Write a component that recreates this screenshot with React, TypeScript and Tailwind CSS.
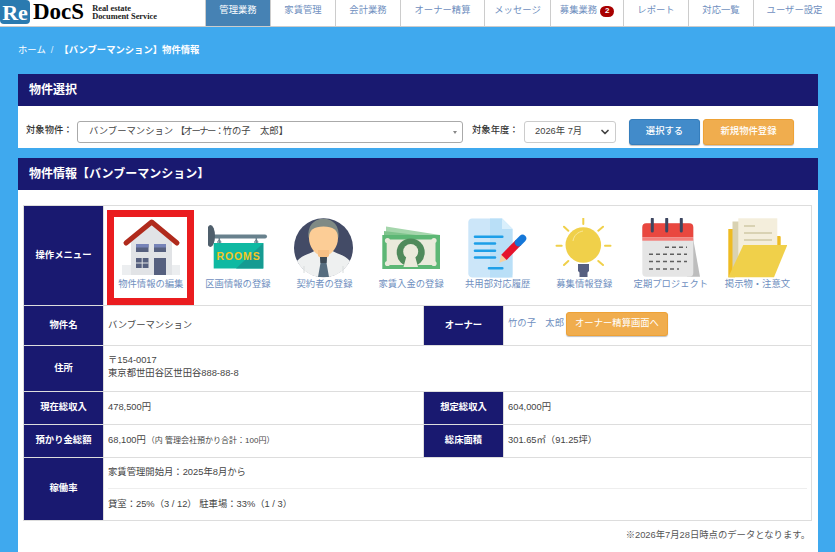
import { ChevronDown } from "lucide-react";

const jp = "font-['Liberation_Sans','Noto_Sans_CJK_JP',sans-serif]";

const navItems = [
  { label: "管理業務", w: "w-[65px]", active: true },
  { label: "家賃管理", w: "w-[65px]" },
  { label: "会計業務", w: "w-[65px]" },
  { label: "オーナー精算", w: "w-[84px]" },
  { label: "メッセージ", w: "w-[66px]" },
  { label: "募集業務", w: "w-[73px]", badge: 2 },
  { label: "レポート", w: "w-[65px]" },
  { label: "対応一覧", w: "w-[65px]" },
  { label: "ユーザー設定", w: "w-[82px]" },
];

function HouseIcon() {
  return (
    <svg width="60" height="60" viewBox="0 0 60 60">
      <g fill="#eceef0">
        <rect x="1" y="47" width="9" height="10" />
        <rect x="50" y="47" width="9" height="10" />
      </g>
      <path d="M10 24 30.5 7 51 24V57H10Z" fill="#e1e3e6" />
      <path d="M5 25 30.7 4 56 25" fill="none" stroke="#b02a1c" strokeWidth="5" strokeLinecap="round" strokeLinejoin="round" />
      <rect x="15" y="26" width="12.5" height="8" fill="#56607f" />
      <rect x="15" y="26" width="12.5" height="3.5" fill="#7683b8" />
      <rect x="33" y="26" width="12" height="8" fill="#56607f" />
      <rect x="33" y="26" width="12" height="3.5" fill="#7683b8" />
      <rect x="15" y="40" width="12.5" height="10" fill="#56607f" />
      <path d="M21.2 40V50M15 45H27.5" stroke="#e1e3e6" strokeWidth="1" />
      <rect x="33" y="40" width="12" height="17" fill="#56607f" />
    </svg>
  );
}

function RoomsIcon() {
  return (
    <svg width="60" height="60" viewBox="0 0 60 60">
      <rect x="2" y="16.5" width="57" height="4" rx="2" fill="#68818d" />
      <ellipse cx="2.5" cy="18" rx="4.5" ry="11" fill="#4f5f6c" />
      <path d="M11.3 20V25M48.3 20V25" stroke="#68818d" strokeWidth="1.5" />
      <circle cx="11.3" cy="24" r="1.6" fill="none" stroke="#68818d" />
      <circle cx="48.3" cy="24" r="1.6" fill="none" stroke="#68818d" />
      <rect x="5.7" y="25" width="49.6" height="25.5" fill="#0fb9a2" />
      <path d="M55.3 25V50.5H28Z" fill="#169b92" />
      <text x="30.5" y="42" textAnchor="middle" fontSize="10.5" fontWeight="700" letterSpacing="0.9" fill="#f3c623" fontFamily="Liberation Sans, sans-serif">ROOMS</text>
    </svg>
  );
}

function PersonIcon() {
  return (
    <svg width="60" height="60" viewBox="0 0 60 60">
      <circle cx="29.5" cy="29.7" r="29.5" fill="#434b66" />
      <path d="M3 43C8 37 16 36 22 32H37C43 36 51 37 56 43 51 53 41 59.5 29.5 59.5 18 59.5 8 53 3 43Z" fill="#eef0f0" />
      <path d="M14.5 20C13 8 20 .8 29.5 .8S46 8 44.5 20L40 12H19Z" fill="#7f8a85" />
      <path d="M15 20C15 12 20 8.5 29.5 8.5S44 12 44 20C44 30 36 38.5 29.5 38.5S15 30 15 20Z" fill="#fccd96" />
      <path d="M24 32H35V38L29.5 42 24 38Z" fill="#f7c085" />
      <path d="M26 39H33L32.5 45 35 59H24L26.5 45Z" fill="#566d7f" />
      <path d="M26 39H33L32.5 45H26.5Z" fill="#3d4a55" />
      <path d="M10 48V55M49 48V55" stroke="#d8dcdc" strokeWidth="1" />
    </svg>
  );
}

function MoneyIcon() {
  return (
    <svg width="60" height="60" viewBox="0 0 60 60">
      <path d="M5 8.5 59 17V24H5Z" fill="#a5d6ac" />
      <path d="M3 13 59 20V26H3Z" fill="#7fc48c" />
      <rect x="1.3" y="17" width="57.7" height="34" fill="#5db775" />
      <path d="M9 21.5H51L54.5 25V43.5L51 47H9L5.7 43.5V25Z" fill="#eaeadb" />
      <circle cx="29.7" cy="34.5" r="14" fill="#4f8a5b" />
      <circle cx="29.7" cy="33.5" r="7.5" fill="#eaeadb" />
      <path d="M25.5 38H34L37 49H22.5Z" fill="#eaeadb" />
      <g fill="#eaeadb">
        <circle cx="6.5" cy="22.5" r="2.6" />
        <circle cx="53" cy="22.5" r="2.6" />
        <circle cx="6.5" cy="45.5" r="2.6" />
        <circle cx="53" cy="45.5" r="2.6" />
      </g>
    </svg>
  );
}

function DocIcon() {
  return (
    <svg width="60" height="60" viewBox="0 0 60 60">
      <path d="M4 .5H34L44.5 11V55A4 4 0 0 1 40.5 59.5H4A4 4 0 0 1 .3 55V4A4 4 0 0 1 4 .5Z" fill="#cce6f9" />
      <path d="M22 .5H34L44.5 11V59.5H22Z" fill="#b9dff7" />
      <path d="M34 .5 44.5 11H34Z" fill="#d9effc" />
      <path d="M7 18.7H34.3M7 25.5H27M7 32.7H27M7 39.5H27M21 50.3H34.3" stroke="#1d9fe8" strokeWidth="2.6" strokeLinecap="round" />
      <path d="M31.3 44.7 33.3 36.5 38.8 42Z" fill="#f6cfa0" />
      <path d="M36 39.3 50.5 24.5" stroke="#e5142c" strokeWidth="7.5" />
      <path d="M50.5 24.5 54.5 20.5" stroke="#1577d8" strokeWidth="7.5" strokeLinecap="round" />
    </svg>
  );
}

function BulbIcon() {
  return (
    <svg width="60" height="60" viewBox="0 0 60 60">
      <path d="M29.3 .5V6M2.5 27.7H7.7M51 27.7H56.5M10 8.7 14.3 12.7M49 8.7 44.3 12.7M10 47 14.3 43M49 47 44.3 43" stroke="#f0d04a" strokeWidth="2" strokeLinecap="round" />
      <circle cx="29.3" cy="27" r="17.8" fill="#f0d04a" />
      <path d="M19 23C20 17 24 14 29 13" fill="none" stroke="#f8e79a" strokeWidth="1" />
      <path d="M24 46H35V53L33.5 54.5V59H25.5V54.5L24 53Z" fill="#565f80" />
    </svg>
  );
}

function CalendarIcon() {
  return (
    <svg width="60" height="60" viewBox="0 0 60 60">
      <path d="M52 20 59 58.7H46Z" fill="#bdbdbd" />
      <rect x="1.3" y="5.3" width="51" height="53.4" rx="4" fill="#e5e5e5" />
      <path d="M1.3 19.3V9.3A4 4 0 0 1 5.3 5.3H48.3A4 4 0 0 1 52.3 9.3V19.3Z" fill="#e9473f" />
      <rect x="1.3" y="19.3" width="51" height="3.4" fill="#f47f7b" />
      <path d="M11.3 1V13M25.7 1V13M40.3 1V13" stroke="#3d4660" strokeWidth="3" strokeLinecap="round" />
      <path d="M24 29.3H46M8 36.3H46M8 43.5H46M8 51H38" stroke="#5f5f5f" strokeWidth="1.5" strokeDasharray="4 3" />
    </svg>
  );
}

function FolderIcon() {
  return (
    <svg width="60" height="60" viewBox="0 0 60 60">
      <path d="M1.3 11H8V59.3H1.3Z" fill="#eebb22" />
      <rect x="48" y="18" width="5.7" height="14" rx="1" fill="#eebb22" />
      <rect x="5.5" y="3.5" width="12" height="50" fill="#d9d2b2" />
      <rect x="11.3" y=".3" width="39" height="50" fill="#f4eedc" />
      <path d="M17 8H28M17 15H45M17 22H45" stroke="#d0c9a5" strokeWidth="1.6" />
      <path d="M1.3 59.3 16.3 27H60.3L47 59.3Z" fill="#f0d04a" />
    </svg>
  );
}

const menuItems = [
  { label: "物件情報の編集", Icon: HouseIcon, selected: true },
  { label: "区画情報の登録", Icon: RoomsIcon },
  { label: "契約者の登録", Icon: PersonIcon },
  { label: "家賃入金の登録", Icon: MoneyIcon },
  { label: "共用部対応履歴", Icon: DocIcon },
  { label: "募集情報登録", Icon: BulbIcon },
  { label: "定期プロジェクト", Icon: CalendarIcon },
  { label: "掲示物・注意文", Icon: FolderIcon },
];

function Th({ children }: { children: React.ReactNode }) {
  return (
    <th className="border border-[#ddd] bg-[#191970] p-0 text-center align-middle font-bold text-white">
      {children}
    </th>
  );
}

function Td({ children, colSpan }: { children: React.ReactNode; colSpan?: number }) {
  return (
    <td colSpan={colSpan} className="border border-[#ddd] px-1 py-0 align-middle">
      {children}
    </td>
  );
}

export default function App() {
  return (
    <div className={`${jp} h-screen overflow-hidden bg-[#3fa9ee] text-[9.33px] text-[#444]`}>
      <header className="flex h-[27px] border-b border-[#ccc] bg-white">
        <div className="flex w-[205px] items-start">
          <div className="flex h-[24px] w-[30px] items-center justify-center rounded-r-[4px] rounded-b-[4px] bg-[#2a7ab0] font-['Liberation_Serif',serif] text-[22px] font-bold text-white">
            Re
          </div>
          <div className="ml-[3px] font-['Liberation_Serif',serif] text-[23px] leading-[24px] font-bold text-black">DocS</div>
          <div className="ml-[8px] pt-[5px] font-['Liberation_Serif',serif] text-[8.4px] leading-[8px] font-bold text-[#222]">
            <div>Real estate</div>
            <div>Document Service</div>
          </div>
        </div>
        {navItems.map((item) => (
          <div
            key={item.label}
            className={`flex ${item.w} items-center justify-center border-l border-[#ccc] pb-[4px] ${
              item.active ? "bg-[#4682b4] text-white" : "text-[#6f8fc0]"
            }`}
          >
            {item.label}
            {item.badge && (
              <span className="ml-[3px] flex h-[11px] w-[14px] items-center justify-center rounded-full bg-[#a80000] text-[8px] font-bold text-white">
                {item.badge}
              </span>
            )}
          </div>
        ))}
      </header>

      <nav className="flex h-[47px] items-center pl-[18px] text-white">
        <span>ホーム</span>
        <span className="ml-[5px] opacity-80">/</span>
        <span className="ml-[6px] font-bold">【バンブーマンション】物件情報</span>
      </nav>

      <section className="mb-[10px] ml-[18px] w-[800px] bg-white">
        <h2 className="flex h-[32px] items-center bg-[#191970] pl-[11px] text-[12px] font-bold text-white">物件選択</h2>
        <div className="flex h-[42px] items-center pt-[10px] pl-[8px]">
          <span className="w-[51px] pb-[2px] font-medium text-[#333]">対象物件：</span>
          <div className="flex h-[22px] w-[386px] items-center justify-between rounded-[3px] border border-[#aaa] pr-[5px] pl-[11px]">
            <span>
              バンブーマンション <span className="tracking-[-1.5px]">【オーナー：</span>竹の子　太郎】
            </span>
            <span className="h-0 w-0 border-x-[2.5px] border-t-[3px] border-x-transparent border-t-[#888]" />
          </div>
          <span className="ml-[9px] w-[52px] pb-[2px] font-medium text-[#333]">対象年度：</span>
          <div className="flex h-[22px] w-[92px] items-center justify-between rounded-[3px] border border-[#ccc] pr-[4px] pl-[10px]">
            <span>2026年 7月</span>
            <ChevronDown className="h-[12px] w-[12px] text-[#444]" strokeWidth={3.5} />
          </div>
          <button className="ml-[13px] h-[26px] w-[71px] rounded-[3px] border border-[#357ebd] bg-[#428bca] pb-[1px] font-medium text-white shadow-[0_1px_1px_rgba(0,0,0,0.25)]">
            選択する
          </button>
          <button className="ml-[3px] h-[26px] w-[91px] rounded-[3px] border border-[#eea236] bg-[#f0ad4e] pb-[1px] font-medium text-white shadow-[0_1px_1px_rgba(0,0,0,0.25)]">
            新規物件登録
          </button>
        </div>
      </section>

      <section className="ml-[18px] h-[394px] w-[800px] bg-white">
        <h2 className="flex h-[32px] items-center bg-[#191970] pl-[11px] text-[12px] font-bold text-white">物件情報【バンブーマンション】</h2>
        <div className="pt-[15px] pl-[5px]">
          <table className="w-[789px] table-fixed border-collapse">
            <colgroup>
              <col className="w-[80px]" />
              <col className="w-[320px]" />
              <col className="w-[80px]" />
              <col />
            </colgroup>
            <tbody>
              <tr className="h-[100px]">
                <Th>操作メニュー</Th>
                <td colSpan={3} className="border border-[#ddd] p-0 align-bottom">
                  <div className="flex pl-[3px]">
                    {menuItems.map(({ label, Icon, selected }, idx) => (
                      <div
                        key={label}
                        className={`flex h-[95px] w-[86.6px] flex-col items-center text-[#6f8fc0] ${
                          selected ? "border-[7px] border-[#ea1c1f] pt-[1px]" : "pt-[8px] pl-[2px]"
                        } ${idx === 0 ? "pl-[1px]" : ""}`}
                      >
                        <Icon />
                        <span className="whitespace-nowrap">{label}</span>
                      </div>
                    ))}
                  </div>
                </td>
              </tr>
              <tr className="h-[40px]">
                <Th>物件名</Th>
                <Td>バンブーマンション</Td>
                <Th>オーナー</Th>
                <Td>
                  <div className="flex items-center pb-[3px]">
                    <span className="text-[#6f8fc0]">竹の子　太郎</span>
                    <button className="ml-[2px] h-[24px] w-[102px] rounded-[3px] border border-[#eea236] bg-[#f0ad4e] pb-[1px] text-white shadow-[0_1px_1px_rgba(0,0,0,0.25)]">
                      オーナー精算画面へ
                    </button>
                  </div>
                </Td>
              </tr>
              <tr className="h-[46px]">
                <Th>住所</Th>
                <Td colSpan={3}>
                  <div className="pb-[4px] leading-[13px]">
                    〒154-0017
                    <br />
                    東京都世田谷区世田谷888-88-8
                  </div>
                </Td>
              </tr>
              <tr className="h-[33px]">
                <Th>現在総収入</Th>
                <Td>478,500円</Td>
                <Th>想定総収入</Th>
                <Td>604,000円</Td>
              </tr>
              <tr className="h-[33px]">
                <Th>預かり金総額</Th>
                <Td>
                  68,100円<span className="ml-[1px] text-[8px]">（内 管理会社預かり合計：100円）</span>
                </Td>
                <Th>総床面積</Th>
                <Td>301.65㎡（91.25坪）</Td>
              </tr>
              <tr className="h-[63px]">
                <Th>稼働率</Th>
                <Td colSpan={3}>
                  <div className="flex h-[31px] items-center border-b border-[#eee]">家賃管理開始月：2025年8月から</div>
                  <div className="flex h-[31px] items-center">貸室：25%（3 / 12） 駐車場：33%（1 / 3）</div>
                </Td>
              </tr>
            </tbody>
          </table>
          <p className="mt-[8px] w-[787px] text-right text-[#555]">※2026年7月28日時点のデータとなります。</p>
        </div>
      </section>
    </div>
  );
}
